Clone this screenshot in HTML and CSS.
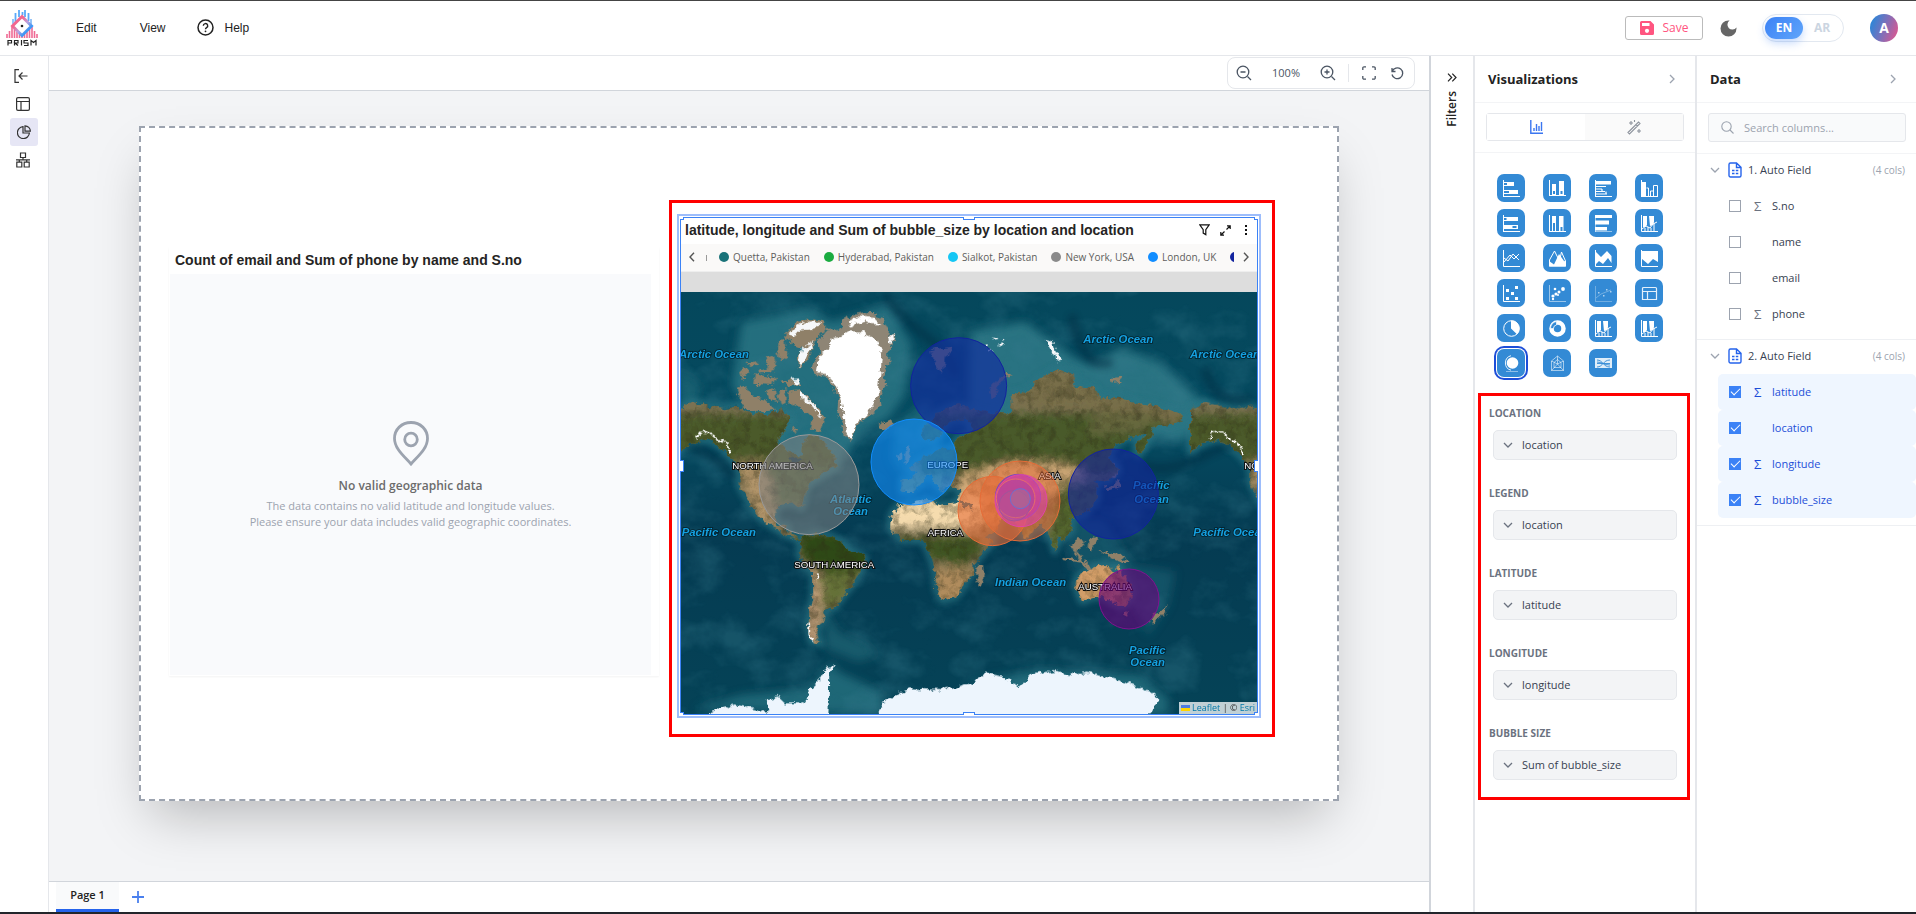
FILE: index.html
```html
<!DOCTYPE html>
<html lang="en">
<head>
<meta charset="utf-8">
<title>Prism</title>
<link rel="stylesheet" href="styles.css">
</head>
<body>
<svg class="sprite" width="0" height="0" aria-hidden="true">
  <symbol id="chev-down" viewBox="0 0 10 10"><path d="M1 3l4 4 4-4" fill="none" stroke="currentColor" stroke-width="1.3"/></symbol>
  <symbol id="chev-right" viewBox="0 0 10 10"><path d="M3 1l4 4-4 4" fill="none" stroke="currentColor" stroke-width="1.3"/></symbol>
  <symbol id="sheet" viewBox="0 0 14 16"><path d="M2.500 1h6L13 5.200V13.500a1.500 1.500 0 0 1-1.500 1.500h-9A1.500 1.500 0 0 1 1 13.500v-11A1.500 1.500 0 0 1 2.500 1zM8.500 1v4.500H13M4 8.500h2.500M7.800 8.500h2.500M4 11.500h2.500M7.800 11.500h2.500" fill="none" stroke="#2563eb" stroke-width="1.4"/></symbol>
  <symbol id="combo" viewBox="0 0 17 17"><path d="M2 1h4v9l-2 2H2zM8 1h5v6l-1 3-3 1z" fill="#fff"/><path d="M.5 0v16.500H17M1 14l4-3 4 2 3-4 4-2M4 16v-3M7 16v-4M10 16v-3M13 16V8" fill="none" stroke="#fff"/></symbol>
</svg>

<div class="app">
  <header class="topbar">
    <svg class="logo" viewBox="0 0 32 38">
      <defs><linearGradient id="lg" x1="0" y1="0" x2="1" y2="1"><stop offset=".3" stop-color="#f2668f"/><stop offset=".55" stop-color="#b9a3e0"/><stop offset=".75" stop-color="#3f97f5"/></linearGradient></defs>
      <path d="M9.500 14V4M13 8V1M16.500 6V3M19 8V1M22.500 12V4" stroke="#5aa9f8" stroke-width="1.800"/>
      <path d="M7 15v-5M25 15v-5" stroke="#7cb6f5" stroke-width="1.600"/>
      <path d="M1 29v-4M3.500 29v-7M6 29V18M8.500 29v-9M11 29v-6M13.500 29v-4M16 29v-2M18.500 29v-4M21 29v-6M23.500 29v-9M26 29V18M28.500 29v-7M31 29v-4" stroke="#ef6a94" stroke-width="1.600"/>
      <path d="M16 7.500L25.500 17 16 26.500 6.500 17z" fill="#fff" stroke="url(#lg)" stroke-width="3"/>
      <circle cx="16" cy="17" r="1.300" fill="#222"/>
      <path d="M2 36.500v-5h3.500v2.500H2M8.500 36.500v-5H12v2.500H9l3 2.500M15.500 31v5.500M22 31.500h-4V34h4v2.500h-4M25 36.500v-5l2.500 2 2.500-2v5" fill="none" stroke="#222" stroke-width="1.200"/>
    </svg>
    <nav class="menu">
      <button class="menu-item">Edit</button>
      <button class="menu-item">View</button>
      <button class="menu-item help">
        <svg width="17" height="17" viewBox="0 0 17 17"><circle cx="8.500" cy="8.500" r="7.500" fill="none" stroke="#222" stroke-width="1.500"/><path d="M6.300 6.800a2.200 2.200 0 1 1 3.300 1.900c-.8.500-1.100.8-1.100 1.600" fill="none" stroke="#222" stroke-width="1.400"/><circle cx="8.500" cy="12.300" r=".9" fill="#222"/></svg>
        Help</button>
    </nav>
    <div class="top-actions">
      <button class="save"><svg width="14" height="14" viewBox="0 0 14 14"><path d="M1.500 0h9L14 3.500v9a1.500 1.500 0 0 1-1.500 1.500h-11A1.500 1.500 0 0 1 0 12.500v-11A1.500 1.500 0 0 1 1.500 0z" fill="#ff5580"/><path d="M2 2h7.500v3H2z" fill="#fff"/><circle cx="7" cy="9.800" r="2.100" fill="#fff"/></svg>Save</button>
      <button class="moon" aria-label="Theme"><svg width="17" height="17" viewBox="0 0 17 17"><path d="M8.500.5a8 8 0 1 0 8 8c0-.4 0-.8-.1-1.100A4.900 4.900 0 1 1 9.600.6z" fill="#666"/></svg></button>
      <div class="lang"><button class="on">EN</button><button>AR</button></div>
      <button class="avatar">A</button>
    </div>
  </header>

  <div class="body">
    <aside class="rail">
      <button class="rail-btn" aria-label="Collapse"><svg width="14" height="14" viewBox="0 0 14 14"><path d="M5 .7H1v12.600h4M13.500 7H5M8.500 3.500L5 7l3.500 3.500" fill="none" stroke="#333" stroke-width="1.200"/></svg></button>
      <button class="rail-btn" aria-label="Table"><svg width="14" height="14" viewBox="0 0 14 14"><path d="M2 .6h10A1.400 1.400 0 0 1 13.400 2v10a1.400 1.400 0 0 1-1.400 1.400H2A1.400 1.400 0 0 1 .6 12V2A1.400 1.400 0 0 1 2 .6zM.6 4.500h12.800M5 4.500v9" fill="none" stroke="#333" stroke-width="1.200"/></svg></button>
      <button class="rail-btn active" aria-label="Report"><svg width="14" height="14" viewBox="0 0 14 14"><path d="M6 1.600A6 6 0 1 0 12.400 8H6zM8 .8v5.400h5.400A5.500 5.500 0 0 0 8 .8z" fill="none" stroke="#333" stroke-width="1.200"/></svg></button>
      <button class="rail-btn" aria-label="Model"><svg width="14" height="16" viewBox="0 0 14 16"><path d="M4.500 1h5v4.500h-5zM.8 10.200h5v4.800h-5zM8.200 10.200h5v4.800h-5zM7 5.500v2.300M0 7.800h14M3.300 8v2M10.700 8v2" fill="none" stroke="#333" stroke-width="1.200"/></svg></button>
    </aside>

    <main class="main">
      <div class="toolbar">
        <div class="zoom">
          <button aria-label="Zoom out"><svg width="16" height="16" viewBox="0 0 16 16"><path d="M11.500 11.500L15 15M4.500 7h5" /><circle cx="7" cy="7" r="5.800"/></svg></button>
          <span class="pct">100%</span>
          <button aria-label="Zoom in"><svg width="16" height="16" viewBox="0 0 16 16"><path d="M11.500 11.500L15 15M4.500 7h5M7 4.500v5"/><circle cx="7" cy="7" r="5.800"/></svg></button>
          <span class="sep"></span>
          <button aria-label="Fit"><svg width="14" height="14" viewBox="0 0 14 14"><path d="M.8 4V2A1.200 1.200 0 0 1 2 .8h2M10 .8h2A1.200 1.200 0 0 1 13.200 2v2M13.200 10v2a1.200 1.200 0 0 1-1.200 1.200h-2M4 13.200H2A1.200 1.200 0 0 1 .8 12v-2"/></svg></button>
          <button aria-label="Reset"><svg width="13" height="13" viewBox="0 0 13 13"><path d="M1 1v3.500h3.500M1.200 4.400A5.400 5.400 0 1 1 1 7.500"/></svg></button>
        </div>
      </div>

      <div class="stage">
        <div class="page">
          <section class="widget empty">
            <h2>Count of email and Sum of phone by name and S.no</h2>
            <div class="empty-body">
              <svg width="36" height="45" viewBox="0 0 36 45"><path d="M18 1.500C8.500 1.500 1.500 8.500 1.500 17.500 1.500 28 12 36 18 43c6-7 16.500-15 16.500-25.500C34.500 8.500 27.500 1.500 18 1.500z" fill="none" stroke="#9ca3af" stroke-width="2.800"/><circle cx="18" cy="18.500" r="6.300" fill="none" stroke="#9ca3af" stroke-width="2.800"/></svg>
              <strong>No valid geographic data</strong>
              <p>The data contains no valid latitude and longitude values.<br>Please ensure your data includes valid geographic coordinates.</p>
            </div>
          </section>

          <section class="widget map-widget">
            <div class="map-inner">
              <div class="map-head">
                <h2>latitude, longitude and Sum of bubble_size by location and location</h2>
                <button aria-label="Filter"><svg width="11" height="12" viewBox="0 0 11 12"><path d="M.8.800h9.400L6.800 5.600v5l-2.600-1.500V5.600z" fill="none" stroke="#111" stroke-width="1.200"/></svg></button>
                <button aria-label="Expand"><svg width="11" height="11" viewBox="0 0 11 11"><path d="M6.500 4.500L10 1M7 .8h3.200V4M4.500 6.500L1 10M.8 7v3.200H4" fill="none" stroke="#111" stroke-width="1.200"/></svg></button>
                <button aria-label="More"><svg width="4" height="10" viewBox="0 0 4 10"><path d="M1 0h2v2H1zM1 4h2v2H1zM1 8h2v2H1z" fill="#111"/></svg></button>
              </div>
              <div class="legend">
                <button aria-label="Previous"><svg width="6" height="10" viewBox="0 0 6 10"><path d="M5 .8L1 5l4 4.200" fill="none" stroke="#555" stroke-width="1.400"/></svg></button>
                <div class="legend-items">
                  <span class="cut"></span>
                  <span class="item"><i class="dot teal"></i>Quetta, Pakistan</span>
                  <span class="item"><i class="dot green"></i>Hyderabad, Pakistan</span>
                  <span class="item"><i class="dot cyan"></i>Sialkot, Pakistan</span>
                  <span class="item"><i class="dot gray"></i>New York, USA</span>
                  <span class="item"><i class="dot blue"></i>London, UK</span>
                  <span class="item"><i class="dot navy"></i></span>
                </div>
                <button aria-label="Next"><svg width="6" height="10" viewBox="0 0 6 10"><path d="M1 .8L5 5 1 9.200" fill="none" stroke="#555" stroke-width="1.400"/></svg></button>
              </div>
              <div class="map">
                <svg class="world" viewBox="18 21 1728 1266" preserveAspectRatio="xMidYMax slice">
                  <defs>
                    <filter id="rough" x="-5%" y="-5%" width="110%" height="110%">
                      <feTurbulence type="fractalNoise" baseFrequency=".05" numOctaves="4" seed="4" result="n"/>
                      <feDisplacementMap in="SourceGraphic" in2="n" scale="24" xChannelSelector="R" yChannelSelector="G"/>
                    </filter>
                    <filter id="terrain" x="0" y="0" width="100%" height="100%">
                      <feTurbulence type="fractalNoise" baseFrequency=".035" numOctaves="5" seed="9" result="n"/>
                      <feColorMatrix in="n" type="matrix" values="0 0 0 0 .03  0 0 0 0 .03  0 0 0 0 .01  2.200 0 0 0 -.9"/>
                    </filter>
                    <filter id="sea" x="0" y="0" width="100%" height="100%">
                      <feTurbulence type="fractalNoise" baseFrequency=".007 .01" numOctaves="5" seed="21"/>
                      <feColorMatrix type="matrix" values="0 0 0 0 .04  0 0 0 0 .2  0 0 0 0 .27  0 2.800 0 0 -1.250"/>
                    </filter>
                    <filter id="b10" x="-30%" y="-30%" width="160%" height="160%"><feGaussianBlur stdDeviation="9"/></filter>
                    <filter id="b16" x="-30%" y="-30%" width="160%" height="160%"><feGaussianBlur stdDeviation="15"/></filter>
                    <linearGradient id="ocean" x1="0" y1="0" x2="0" y2="1"><stop offset="0" stop-color="#05475b"/><stop offset=".35" stop-color="#054a60"/><stop offset=".6" stop-color="#053b52"/><stop offset="1" stop-color="#054357"/></linearGradient>
                    <path id="na" d="M10 375L50 350 100 363 150 370 190 362 230 385 280 388 320 372 350 402 322 440 310 470 345 505 378 510 384 470 405 450 440 465 475 505 485 545 450 560 425 580 400 600 388 640 382 668 350 655 312 660 298 690 308 722 338 722 335 740 365 752 380 768 330 750 285 720 250 690 215 640 192 600 190 550 165 515 130 482 95 463 40 480 10 505 10 440z"/>
                    <path id="sa" d="M378 760L420 745 460 750 500 770 520 795 570 815 565 838 540 890 510 925 480 965 452 975 440 1015 425 1025 430 1065 438 1076 410 1070 400 1035 405 975 415 925 415 865 385 835 372 805z"/>
                    <path id="africa" d="M648 690L670 662 720 650 765 645 790 660 850 655 885 665 905 710 935 760 955 765 925 800 895 840 897 860 870 895 842 935 802 947 785 915 780 865 770 825 755 785 740 765 680 765 645 730z"/>
                    <path id="eurasia" d="M680 622L680 585 708 586 722 560 702 548 742 520 772 508 790 492 835 492 845 460 880 450 892 425 868 400 820 410 795 450 770 470 745 460 742 435 790 380 850 357 905 375 955 385 1008 385 1005 330 1060 318 1085 288 1145 252 1200 272 1195 305 1260 312 1275 342 1330 335 1360 350 1430 360 1470 372 1510 385 1527 405 1480 420 1440 425 1425 455 1400 500 1388 510 1385 480 1412 448 1360 458 1320 480 1300 520 1330 552 1302 590 1260 585 1268 640 1228 690 1185 700 1190 735 1160 765 1150 745 1140 800 1125 750 1100 715 1078 725 1052 765 1030 720 1010 695 985 690 960 740 925 755 895 690 895 655 850 645 860 620 830 600 800 620 780 590 765 570 740 590 715 620z"/>
                    <path id="aus" d="M1205 875L1235 860 1260 845 1285 840 1315 845 1310 860 1325 865 1330 840 1340 865 1365 905 1370 930 1350 965 1330 965 1305 950 1280 933 1250 937 1220 950 1210 925 1203 900z"/>
                    <g id="isles">
                      <path d="M330 150L365 110 410 102 450 110 455 130 430 160 410 192 395 232 372 250 370 220 385 190 350 178zM310 175l20-18 8 60-15 10-15-20zM340 320L372 315 402 340 430 370 450 405 437 442 405 430 415 402 385 375 345 352zM185 312l30-8 15 30 40 10 30 30-50 8-45-15zM270 315l30-5 4 35-20-5zM310 312l22-2 0 50-20-10zM315 290l55-8 6 18-40 4zM240 268l60 12-5 20-60-3zM195 255l28-6-2 20-22 10zM215 235l20-12 12 12-20 8zM270 215l25-5 10 30-10 20-15-10zM250 250l30-4 10 14-38 6zM350 425l20 5-10 18z"/>
                      <path d="M615 412l15 2 20-9 6 14-20 16-20-5zM905 842l22-2 2 20-10 42-12-4-4-30zM1190 785l45 50 25 25-12 2-38-38zM1185 780L1215 760 1228 780 1210 802 1192 796zM1240 765l20-12 4 14-14 28-12-8zM1270 798L1325 805 1360 830 1345 832 1310 820zM1165 815l70 14-2 6-66-10zM1435 985l22-8 20-20-4 22-38 40-12-8zM1345 975l16 3-8 16-8-6zM1305 555l10-28 12 30-10 25zM1290 605l24-5 18-16 4 18-40 14zM1305 280l30-5 8 16-30 2zM950 340l-8-22 25-36 30-18 12 4-38 28-8 36zM765 195l60-10 8 14-20 14-5 40-10 10-20-30zM690 500l14-20 8 40-22 14zM670 510l12-5 0 18-12 2z"/>
                    </g>
                    <clipPath id="landclip"><use href="#na"/><use href="#na" x="1536"/><use href="#sa"/><use href="#africa"/><use href="#eurasia"/><use href="#aus"/></clipPath>
                  </defs>
                  <rect x="18" y="-40" width="1728" height="1330" fill="url(#ocean)"/>
                  <g filter="url(#b16)" fill="#2a7684">
                    <path opacity=".85" d="M200 110L400 70 470 110 640 60 710 180 690 330 640 400 560 440 480 560 400 600 220 390 170 300z"/>
                    <path opacity=".95" d="M885 140L1050 110 1200 220 1250 240 1340 190 1450 230 1560 330 1640 400 1560 440 1510 470 1400 440 1100 480 880 420z"/>
                    <path opacity=".5" d="M10 250L80 300 60 380 10 380z"/>
                    <path opacity=".6" d="M660 420L760 340 800 500 700 600 650 520z"/>
                    <path opacity=".4" d="M1160 700L1290 700 1380 840 1500 860 1480 960 1420 1050 1300 860 1190 860z"/>
                    <path opacity=".7" d="M60 1270L200 1230 400 1210 470 1130 490 1160 620 1220 620 1290zM900 1190L1100 1150 1400 1170 1480 1240 1480 1290 890 1290z"/>
                    <path opacity=".5" d="M450 960l40 80 80 30 40 40-60 20-100-40z"/>
                  </g>
                  <rect x="18" y="-40" width="1728" height="1330" filter="url(#sea)" opacity=".35"/>
                  <g fill="none" stroke="#2a7684" stroke-width="20" stroke-linejoin="round" opacity=".8" filter="url(#b10)">
                    <use href="#na"/><use href="#na" x="1536"/><use href="#sa"/><use href="#africa"/><use href="#eurasia"/><use href="#aus"/>
                  </g>
                  <g fill="none" stroke="#022c40" stroke-width="26" filter="url(#b10)" opacity=".45"><path d="M630 30q60 80 130 130t80 110M30 480q90 20 150 100M1410 540q60 30 180-30t120-10M1190 90q40 180 120 140M1590 250q30 120 140 90"/></g>
                  <g filter="url(#rough)">
                    <g fill="#7d7353"><use href="#na"/><use href="#na" x="1536"/><use href="#sa"/><use href="#africa"/><use href="#eurasia"/><use href="#aus"/></g><use href="#isles" fill="#8f8068"/>
                    <g clip-path="url(#landclip)">
                      <g filter="url(#b16)">
                        <g id="nacol"><rect x="-20" y="388" width="520" height="192" fill="#4b5a2c"/><path d="M180 530l90 0 40 200-60-20z" fill="#b3956b"/><path d="M300 540h180v120H300z" fill="#55653a"/></g>
                        <use href="#nacol" x="1536"/>
                        <rect x="730" y="385" width="820" height="185" fill="#485a2a"/>
                        <path d="M1000 340L1100 240 1240 300 1540 380 1500 420 1400 400 1240 370 1100 370z" fill="#786e49"/>
                        <path d="M1260 380l200 10-60 50-160 10z" fill="#66683c"/>
                        <path d="M860 570L1000 530 1160 535 1230 560 1190 610 1050 640 1000 720 880 720 840 620z" fill="#cfa877"/>
                        <path d="M1160 590h140v220h-190z" fill="#52652f"/><path d="M1020 660h60v120h-60z" fill="#8a7b48"/>
                        <path d="M680 570h120v60H680z" fill="#7a7f4a"/>
                        <path d="M630 640h290v90H630z" fill="#f6dcae"/><path d="M640 755h270l10 50-60 40-110-30z" fill="#3f5420"/><path d="M765 850h130v120H765z" fill="#b08c5d"/>
                        <path d="M360 740h230v120H400z" fill="#2d4a14"/><path d="M430 860h130l-60 90-60 30z" fill="#657138"/><path d="M395 850h35l10 90-10 150-40-10z" fill="#bd9b78"/>
                        <path d="M1195 830h190v140h-190z" fill="#d49f69"/><path d="M1330 850l50 60-20 60-30-20z" fill="#86814a"/>
                      </g>
                      <rect x="18" y="230" width="1728" height="860" filter="url(#terrain)" opacity=".5"/>
                    </g>
                    <path d="M338 522l24-8 24 12-30 12zM360 545l12-14 8 22z" fill="#173949"/>
                    <path d="M412 240L435 205 430 170 455 135 495 130 505 105 545 85 590 82 625 100 642 135 640 150 665 150 655 175 640 200 640 240 625 270 635 300 615 330 620 365 590 385 560 405 540 440 525 465 505 445 500 410 487 380 490 340 470 295 450 270 425 275 410 255z" fill="#8e8574"/>
                    <path d="M430 235L440 205 465 182 470 160 500 155 520 138 560 140 600 165 622 200 617 260 612 310 600 350 575 385 545 415 528 460 512 440 505 390 495 340 475 290 450 265 425 262zM515 110l35-16 50 5 20 20-30-2-20-10-40 15z" fill="#fff"/>
                    <path d="M340 148l35-32 40-8 25 8-30 15-30 2-25 22zM380 190l40-20-20 30-15 35-12 8zM350 282l22-2 2 16-20 2zM375 320l50 45 15 35-25-30-40-35zM640 155l22-4-10 20-10 8zM1115 165l18 5 12 40-12-5zM1140 200l22 25-18 6zM925 180l8-4 3 6-8 4zM940 192l10-3 3 6-10 4zM955 160l10-4 2 8-9 3zM970 178l14-5 3 7-14 5zM985 160l6-2 1 5-6 2z" fill="#f6f8fa"/>
                    <g id="peaks" fill="none" stroke="#fff" stroke-width="6"><path d="M66 460l8-20 30 2 20 18 30 15 14 30" stroke-dasharray="12 3"/></g><use href="#peaks" x="1536"/>
                    <path d="M403 1010v40l14 22M425 865l4 20" stroke="#fff" stroke-width="5" fill="none"/>
                    <g fill="#edf5fd"><path d="M95 1300L110 1278 180 1258 250 1275 280 1280 275 1245 310 1236 330 1255 375 1255 395 1245 400 1220 430 1190 455 1148 480 1138 463 1165 460 1300zM605 1300L625 1250 700 1210 800 1215 885 1195 935 1163 985 1175 1035 1205 1070 1168 1135 1158 1185 1170 1235 1160 1305 1175 1365 1195 1425 1220 1447 1240 1440 1265 1412 1300z"/></g>
                  </g>
                  <g class="sea-name">
                    <text x="12" y="219">Arctic Ocean</text><text x="1225" y="173">Arctic Ocean</text><text x="1545" y="219">Arctic Ocean</text>
                    <text x="20" y="752">Pacific Ocean</text><text x="1555" y="752">Pacific Ocean</text><text x="960" y="902">Indian Ocean</text>
                    <text x="465" y="653">Atlantic</text><text x="475" y="690">Ocean</text>
                    <text x="1374" y="613">Pacific</text><text x="1378" y="653">Ocean</text>
                    <text x="1362" y="1106">Pacific</text><text x="1366" y="1142">Ocean</text>
                  </g>
                  <g class="land-name">
                    <text x="172" y="553">NORTH AMERICA</text><text x="358" y="848">SOUTH AMERICA</text><text x="757" y="548">EUROPE</text><text x="758" y="752">AFRICA</text><text x="1091" y="583">ASIA</text><text x="1210" y="914">AUSTRALIA</text><text x="1708" y="553">NORTH AMERICA</text>
                  </g>
                  <g fill-opacity=".6" stroke-width="3">
                    <circle cx="402" cy="599" r="150" fill="#828282" stroke="#999" fill-opacity=".55"/>
                    <circle cx="851" cy="302" r="144" fill="#12309e" stroke="#12239e" fill-opacity=".7"/>
                    <circle cx="717" cy="531" r="129" fill="#118dff" stroke="#118dff"/>
                    <circle cx="1315" cy="627" r="135" fill="#12239e" stroke="#12239e"/>
                    <circle cx="1362" cy="942" r="90" fill="#6b007b" stroke="#81128f"/>
                    <circle cx="953" cy="678" r="104" fill="#e66c37" stroke="#e66c37"/>
                    <circle cx="1035" cy="648" r="120" fill="#e66c37" stroke="#e66c37" fill-opacity=".5"/>
                    <circle cx="1029" cy="636" r="68" fill="#a0309a" stroke="#744ec2"/>
                    <circle cx="1038" cy="647" r="78" fill="#e044a7" stroke="#e044a7"/>
                    <circle cx="1022" cy="640" r="58" fill="#b0469a" stroke="#e66c6c"/>
                    <circle cx="1018" cy="662" r="46" fill="#b55a8c" stroke="#a0549a" fill-opacity=".4"/>
                    <circle cx="1036" cy="641" r="30" fill="#a86a94" stroke="#6b6fd0"/>
                  </g>
                </svg>
                <div class="credit"><svg width="9" height="6" viewBox="0 0 9 6"><path d="M0 0h9v3H0z" fill="#4c7be1"/><path d="M0 3h9v3H0z" fill="#ffd500"/></svg> <a href="#">Leaflet</a> | © <a href="#">Esri</a></div>
              </div>
            </div>
            <div class="handles"><i class="h tl"></i><i class="h t"></i><i class="h tr"></i><i class="h l"></i><i class="h r"></i><i class="h bl"></i><i class="h b"></i><i class="h br"></i></div>
          </section>
          <div class="mark"></div>
        </div>
      </div>

      <footer class="pages"><button class="page-tab">Page 1</button><button class="add" aria-label="Add page"><svg width="12" height="12" viewBox="0 0 12 12"><path d="M6 0v12M0 6h12" stroke="#4a80ee" stroke-width="1.800"/></svg></button></footer>
    </main>

    <aside class="filters">
      <button aria-label="Expand filters"><svg width="10" height="9" viewBox="0 0 10 9"><path d="M1 .7l3.700 3.800L1 8.300M5.300.7L9 4.500 5.300 8.300" fill="none" stroke="#222" stroke-width="1.200"/></svg></button>
      <span>Filters</span>
    </aside>

    <aside class="panel viz">
      <div class="panel-head"><h3>Visualizations</h3><button aria-label="Collapse visualizations"><svg width="10" height="10"><use href="#chev-right"/></svg></button></div>
      <div class="tabs-wrap"><div class="tabs">
        <button class="on" aria-label="Charts"><svg width="13" height="14" viewBox="0 0 13 14"><path d="M.8 0v13.200H13M4 11V8M6.500 11V4M9 11V6M11.500 11V2" fill="none" stroke="#3b76f0" stroke-width="1.400"/></svg></button>
        <button aria-label="Format"><svg width="15" height="15" viewBox="0 0 15 15"><path d="M1 12.500L11.500 2l1.500 1.500L2.500 14zM9 4.500L10.500 6M4 1v4M2 3h4M12 9v4M10 11h4M7.500 0v2" fill="none" stroke="#8c929c" stroke-width="1.100"/></svg></button>
      </div></div>
      <div class="tiles">
        <button class="tile" aria-label="Stacked bar"><svg viewBox="0 0 17 17"><path d="M.5 0v17M0 16.500h17" stroke="#fff"/><path d="M1 2h10v4H1zM1 10h14v4H1z" fill="#fff"/><path d="M1 3h3v2H1zM1 11h5v2H1z" fill="#338ad5"/></svg></button>
        <button class="tile" aria-label="Stacked column"><svg viewBox="0 0 17 17"><path d="M.5 0v16M0 15.500h17" stroke="#fff"/><path d="M3 4h4v11H3zM10 1h5v14h-5z" fill="#fff"/><path d="M4 11h2v3H4zM11.500 11h2v3h-2z" fill="#338ad5"/></svg></button>
        <button class="tile" aria-label="Clustered bar"><svg viewBox="0 0 17 17"><path d="M.5 0v17M0 16.500h17" stroke="#fff"/><path d="M1 1h15v3.500H1z" fill="#fff"/><path d="M1 6.500h10M1 9h6M1 11.500h9M1 14h11M7 9v2.500M11 11.500V14" fill="none" stroke="#fff" stroke-width="1.200"/></svg></button>
        <button class="tile" aria-label="Clustered column"><svg viewBox="0 0 17 17"><path d="M.5 0v17M0 16.500h17" stroke="#fff"/><path d="M1 2h4v14H1z" fill="#fff"/><path d="M5.500 8h2v8M9.500 16v-5h3v5M12.500 16V5.500h4V16" fill="none" stroke="#fff"/></svg></button>
        <button class="tile" aria-label="Full stacked bar"><svg viewBox="0 0 17 17"><path d="M.5 0v17M0 16.500h17" stroke="#fff"/><path d="M1 2h14v4H1zM1 10h14v4H1z" fill="#fff"/><path d="M1 3h2.500v2H1zM9.500 11h4v2h-4z" fill="#338ad5"/></svg></button>
        <button class="tile" aria-label="Full stacked column"><svg viewBox="0 0 17 17"><path d="M.5 0v17M0 16.500h17" stroke="#fff"/><path d="M3 1h4v15H3zM10 1h4.500v15H10z" fill="#fff"/><path d="M4 8h2v8H4zM11.500 12h2v4h-2z" fill="#338ad5"/></svg></button>
        <button class="tile" aria-label="Bars"><svg viewBox="0 0 17 17"><path d="M0 0h17v3H0zM0 5.500h14v4H0zM0 12h12v3.500H0z" fill="#fff"/><path d="M.5 0v17M0 16.500h17" stroke="#fff" opacity=".5"/></svg></button>
        <button class="tile" aria-label="Combo"><svg><use href="#combo"/></svg></button>
        <button class="tile" aria-label="Line"><svg viewBox="0 0 17 17"><path d="M.5 0v16.500H17M1 12l6-7 4 4 5-5M1 8l4 3 5-7 6 6" fill="none" stroke="#fff"/></svg></button>
        <button class="tile" aria-label="Area"><svg viewBox="0 0 17 17"><path d="M.5 16V10L5.500 1l5 10 2-9 4 9v5z" fill="none" stroke="#fff"/><path d="M0 11l5 3.500L10 4l5 7 2 .5v5H0z" fill="#fff"/></svg></button>
        <button class="tile" aria-label="Stacked area"><svg viewBox="0 0 17 17"><path d="M.5 0v16.500H17" fill="none" stroke="#fff"/><path d="M1 2l5 5 6-6 4.500 5v7L13 8l-5 6-4-3-3 3z" fill="#fff"/></svg></button>
        <button class="tile" aria-label="Full area"><svg viewBox="0 0 17 17"><path d="M.5 0v16.500H17" fill="none" stroke="#fff"/><path d="M1 1h16v11l-5-3-5 5-6-5z" fill="#fff"/></svg></button>
        <button class="tile" aria-label="Scatter"><svg viewBox="0 0 17 17"><path d="M.5 0v16.500H17" fill="none" stroke="#fff"/><path d="M3 4h3v3H3zM12 1h3v3h-3zM8 7h3v3H8zM3 12h3v3H3zM12 12h3v3h-3z" fill="#fff"/></svg></button>
        <button class="tile" aria-label="Dots"><svg viewBox="0 0 17 17"><path d="M.5 0v16.500H17" fill="none" stroke="#fff" opacity=".5"/><g fill="#fff"><circle cx="6" cy="4" r="1.300"/><circle cx="14" cy="4" r="1.900"/><circle cx="10" cy="7" r="1.500"/><circle cx="7" cy="9" r="1.600"/><circle cx="4" cy="11" r="1.600"/><circle cx="4" cy="14" r="1.200"/><circle cx="9" cy="10" r="1"/></g></svg></button>
        <button class="tile" aria-label="Trend"><svg viewBox="0 0 17 17"><path d="M.5 1v15.500H17M1 13l5-4 5-2 5-2" fill="none" stroke="#fff" opacity=".3"/><path d="M3 7h1.500v1.500H3zM8 10h1.500v1.500H8zM11 4h1.500v1.500H11zM15 6h1.500v1.500H15z" fill="#fff" opacity=".6"/></svg></button>
        <button class="tile" aria-label="Table"><svg viewBox="0 0 17 17"><path d="M2.500 2.500h12a1 1 0 0 1 1 1v11h-14v-11a1 1 0 0 1 1-1zM1.500 6.500h14M6.500 6.500v8" fill="none" stroke="#e4f0fb" stroke-width="1.200"/></svg></button>
        <button class="tile" aria-label="Pie"><svg viewBox="0 0 17 17"><circle cx="8.500" cy="8.500" r="7.800" fill="none" stroke="#fff"/><path d="M8 .5a8 8 0 0 1 6 13.700L8 8.500z" fill="#fff"/></svg></button>
        <button class="tile" aria-label="Donut"><svg viewBox="0 0 17 17"><circle cx="8.500" cy="8.500" r="6" fill="none" stroke="#fff" stroke-width="4.500"/><path d="M1.500 8.500a7 7 0 0 1 6-7v3.500a3.500 3.500 0 0 0-3 3.500z" fill="#338ad5" stroke="#fff" stroke-width=".7"/></svg></button>
        <button class="tile" aria-label="Combo line"><svg><use href="#combo"/></svg></button>
        <button class="tile" aria-label="Combo stacked"><svg><use href="#combo"/></svg></button>
        <button class="tile selected" aria-label="Map"><svg viewBox="0 0 17 17"><circle cx="9.500" cy="8" r="5.800" fill="#fff"/><path d="M8 .7a7.500 7.500 0 0 0 0 14.500M3 17h12" fill="none" stroke="#fff" stroke-width=".9"/></svg></button>
        <button class="tile" aria-label="Radar"><svg viewBox="0 0 17 17"><path d="M8.500 1l6 5v9.500h-12V6zM8.500 4.500l3.500 3v5H5v-5zM8.500 1v8l6 6.500M8.500 9l-6 6.500M2.500 6l6 3 6-3" fill="none" stroke="#fff" stroke-width=".8" opacity=".7"/></svg></button>
        <button class="tile" aria-label="Sankey"><svg viewBox="0 0 17 17"><path d="M0 3h17v10H0z" fill="#fff" opacity=".85"/><path d="M2 5c6 0 6 7 13 7M2 12c6 0 6-7 13-7M2 8.500h13M2 7c5 0 7 3 13 3" fill="none" stroke="#338ad5" stroke-width=".9"/></svg></button>
      </div>
      <div class="fields">
        <div class="field"><h4>LOCATION</h4><button><svg width="10" height="10"><use href="#chev-down"/></svg>location</button></div>
        <div class="field"><h4>LEGEND</h4><button><svg width="10" height="10"><use href="#chev-down"/></svg>location</button></div>
        <div class="field"><h4>LATITUDE</h4><button><svg width="10" height="10"><use href="#chev-down"/></svg>latitude</button></div>
        <div class="field"><h4>LONGITUDE</h4><button><svg width="10" height="10"><use href="#chev-down"/></svg>longitude</button></div>
        <div class="field"><h4>BUBBLE SIZE</h4><button><svg width="10" height="10"><use href="#chev-down"/></svg>Sum of bubble_size</button></div>
      </div>
    </aside>

    <aside class="panel data">
      <div class="panel-head"><h3>Data</h3><button aria-label="Collapse data"><svg width="10" height="10"><use href="#chev-right"/></svg></button></div>
      <div class="search-wrap"><label class="search"><svg width="13" height="13" viewBox="0 0 13 13"><circle cx="5.500" cy="5.500" r="4.700" fill="none" stroke="#9ca3af" stroke-width="1.100"/><path d="M9 9l3.500 3.500" stroke="#9ca3af" stroke-width="1.100"/></svg><input type="text" placeholder="Search columns..." aria-label="Search columns"></label></div>
      <div class="source">
        <div class="source-head"><svg class="c" width="10" height="10"><use href="#chev-down"/></svg><svg width="14" height="16"><use href="#sheet"/></svg><span>1. Auto Field</span><small>(4 cols)</small></div>
        <label class="col"><input type="checkbox"><b>Σ</b>S.no</label>
        <label class="col"><input type="checkbox"><b></b>name</label>
        <label class="col"><input type="checkbox"><b></b>email</label>
        <label class="col"><input type="checkbox"><b>Σ</b>phone</label>
      </div>
      <div class="source">
        <div class="source-head"><svg class="c" width="10" height="10"><use href="#chev-down"/></svg><svg width="14" height="16"><use href="#sheet"/></svg><span>2. Auto Field</span><small>(4 cols)</small></div>
        <label class="col picked"><input type="checkbox" checked><b>Σ</b>latitude</label>
        <label class="col picked"><input type="checkbox" checked><b></b>location</label>
        <label class="col picked"><input type="checkbox" checked><b>Σ</b>longitude</label>
        <label class="col picked"><input type="checkbox" checked><b>Σ</b>bubble_size</label>
      </div>
    </aside>
  </div>
</div>
</body>
</html>
```
FILE: styles.css
```css
* { box-sizing: border-box; }
body { margin: 0; font-family: "Open Sans", "Noto Sans", sans-serif; font-size: 11px; line-height: 16px; color: #374151; background: #fff; }
button { font: inherit; color: inherit; background: none; border: 0; padding: 0; margin: 0; display: flex; align-items: center; justify-content: center; }
h2, h3, h4, p { margin: 0; }
.sprite { position: absolute; }
.app { height: 100vh; display: flex; flex-direction: column; border-top: 1px solid #444; border-bottom: 2px solid #22252b; overflow: hidden; }

.topbar { height: 55px; flex: none; display: flex; align-items: center; border-bottom: 1px solid #e5e7eb; padding: 0 18px 0 6px; }
.logo { width: 32px; height: 38px; }
.menu { display: flex; align-items: center; gap: 43px; margin-left: 38px; padding-bottom: 1px; font: 12px/16px "Liberation Sans", Arial, sans-serif; color: #222; }
.menu-item { gap: 10px; }
.help { margin-left: -11px; }
.top-actions { margin-left: auto; display: flex; align-items: center; font-size: 12px; }
.save { width: 78px; height: 24px; gap: 9px; border: 1px solid #bbb; border-radius: 3px; color: #ff5580; }
.moon { margin: 0 25px 0 17px; }
.lang { display: flex; width: 82px; height: 28px; padding: 2px; border: 1px solid #e2e8f0; border-radius: 14px; font-weight: 700; }
.lang button { flex: 1; color: #cbd5e1; border-radius: 11px; }
.lang .on { color: #fff; background: linear-gradient(135deg, #3b82f6, #60a5fa); box-shadow: 0 4px 8px rgba(59, 130, 246, .3); }
.avatar { width: 28px; height: 28px; margin-left: 26px; border-radius: 50%; color: #fff; font-weight: 700; font-size: 14px; background: linear-gradient(110deg, #2c86d8 10%, #7c70ba 50%, #e0568e 95%); }

.body { flex: 1; min-height: 0; display: grid; grid-template-columns: 49px minmax(0, 1fr) 44px 222px 219px; }
.rail { border-right: 1px solid #e5e7eb; padding: 6px 0 0 10px; }
.rail-btn { width: 28px; height: 28px; border-radius: 3px; }
.rail-btn:first-child { width: 22px; }
.rail-btn:nth-child(2), .rail-btn:nth-child(4) { width: 25px; }
.rail-btn.active { background: #e6e6f5; }

.main { display: flex; flex-direction: column; border-right: 2px solid #d1d5db; min-height: 0; }
.toolbar { height: 35px; flex: none; display: flex; justify-content: flex-end; align-items: center; padding-right: 14px; border-bottom: 1px solid #d1d5db; }
.zoom { display: flex; align-items: center; height: 32px; width: 188px; padding: 0 10px 0 8px; border: 1px solid #e5e7eb; border-radius: 8px; color: #4b5563; }
.zoom svg { fill: none; stroke: #4b5563; stroke-width: 1.3; }
.pct { flex: 1; text-align: center; }
.sep { width: 1px; height: 18px; background: #e5e7eb; margin: 0 13px 0 12px; }
.zoom .sep + button { margin-right: 15px; }
.stage { flex: 1; min-height: 0; overflow: hidden; padding: 35px 90px 0; background: #f3f4f6; }
.page { position: relative; aspect-ratio: 16 / 9; background: #fff; border: 2px dashed #9ca3af; box-shadow: 0 25px 50px -12px rgba(0, 0, 0, .25); }
.pages { height: 31px; flex: none; display: flex; border-top: 1px solid #d1d5db; padding-left: 7px; }
.page-tab { width: 63px; background: #f9fafb; border-bottom: 3px solid #2563eb; font-weight: 600; color: #222; padding-bottom: 1px; }
.add { margin-left: 13px; }

h2 { font: bold 14px/20px "Liberation Sans", Arial, sans-serif; color: #252423; white-space: nowrap; }
.widget { position: absolute; display: flex; flex-direction: column; }
.empty { left: 28px; top: 119px; width: 490px; height: 429px; padding: 3px 8px 1px 1px; box-shadow: 0 1px 2px rgba(0, 0, 0, .05); }
.empty h2 { padding: 0 5px 4px; }
.empty-body { flex: 1; display: flex; flex-direction: column; align-items: center; justify-content: center; background: #f9fafc; text-align: center; color: #9ca3af; padding-top: 2px; }
.empty-body strong { margin-top: 12px; font-size: 12px; font-weight: 600; color: #6b6b6b; }
.empty-body p { margin-top: 4px; }

.map-widget { left: 536px; top: 86px; width: 584px; height: 504px; border: 2px solid #9dbdfb; padding: 1px; }
.map-inner { flex: 1; display: flex; flex-direction: column; border: 1px solid #3b82f6; min-height: 0; }
.map-head { height: 26px; flex: none; display: flex; align-items: center; padding: 0 9px 2px 4px; gap: 10px; }
.map-head h2 { flex: 1; }
.map-head button:last-child { margin-left: 3px; }
.legend { height: 28px; flex: none; display: flex; align-items: center; gap: 9px; padding: 0 8px 2px; background: #faf9f8; border-bottom: 1px solid #eee; color: #605e5c; font-size: 10px; }
.legend-items { flex: 1; display: flex; gap: 14px; overflow: hidden; }
.cut { flex: none; width: 3px; height: 6px; margin: 6px -2px 0 0; border-right: 1px solid #999; }
.item { display: flex; align-items: center; gap: 4px; white-space: nowrap; flex: none; }
.dot { width: 10px; height: 10px; border-radius: 50%; }
.teal { background: #197278; } .green { background: #1aab40; } .cyan { background: #15c6f4; } .gray { background: #8a8a8a; } .blue { background: #118dff; } .navy { background: #12239e; }
.map { flex: 1; min-height: 0; position: relative; border-top: 20px solid #ddd; }
.world { display: block; width: 100%; height: 100%; }
.sea-name { font: italic bold 34px "Liberation Sans", Arial, sans-serif; fill: #14a0e0; stroke: #04202b; stroke-width: 5px; paint-order: stroke; }
.land-name { font: 29px "Liberation Sans", Arial, sans-serif; fill: #fff; stroke: #111; stroke-width: 6px; paint-order: stroke; }
.credit { position: absolute; right: 0; bottom: 0; height: 12px; padding: 0 2px; background: rgba(255, 255, 255, .75); font-size: 9px; line-height: 12px; color: #333; }
.credit a { color: #0078a8; text-decoration: none; }
.handles { position: absolute; inset: 1px; overflow: hidden; }
.h { position: absolute; width: 12px; height: 12px; background: #fff; border: 1px solid #3b82f6; }
.tl, .t, .tr { top: -9px; } .bl, .b, .br { bottom: -9px; }
.tl, .l, .bl { left: -8px; } .tr, .r, .br { right: -8px; }
.t, .b { left: calc(50% - 6px); } .l, .r { top: calc(50% - 6px); }
.mark { position: absolute; left: 528px; top: 72px; width: 606px; height: 537px; border: 3px solid #f00; pointer-events: none; }

.filters { display: flex; flex-direction: column; align-items: center; gap: 9px; padding-top: 17px; border-right: 2px solid #e5e7eb; }
.filters span { writing-mode: vertical-rl; transform: rotate(180deg); font-size: 12px; font-weight: 600; color: #222; }

.panel { background: #fff; }
.viz { border-right: 2px solid #e5e7eb; }
.panel-head { height: 47px; display: flex; align-items: center; justify-content: space-between; padding: 0 18px 0 13px; border-bottom: 1px solid #f3f4f6; color: #9ca3af; }
h3 { font-size: 13px; line-height: 18px; font-weight: 700; color: #222; }
.tabs-wrap { padding: 10px 11px 11px; border-bottom: 1px solid #f3f4f6; }
.tabs { display: flex; height: 28px; border: 1px solid #e5e7eb; border-radius: 3px; }
.tabs button { flex: 1; background: #fafafa; }
.tabs .on { background: #fff; }
.tiles { display: grid; grid-template-columns: repeat(4, 28px); gap: 7px 18px; padding: 21px 0 16px 22px; }
.tile { width: 28px; height: 28px; border-radius: 7px; background: #338ad5; }
.tile svg { width: 17px; height: 17px; fill: none; }
.selected { box-shadow: 0 0 0 1px #fff, 0 0 0 3px #1d4ed8; }
.fields { margin: 0 5px 0 3px; border: 3px solid #f00; padding: 9px 9px 17px 8px; display: grid; gap: 25px; }
.field { display: grid; gap: 9px; }
h4 { font-size: 10px; line-height: 16px; font-weight: 700; color: #6b7280; }
.field button { height: 30px; margin: 0 1px 0 4px; padding-left: 9px; justify-content: flex-start; gap: 9px; background: #f3f4f6; border: 1px solid #e5e7eb; border-radius: 5px; }
.field svg { color: #6b7280; }

.search-wrap { padding: 10px 10px 11px 11px; border-bottom: 1px solid #f3f4f6; }
.search { display: flex; align-items: center; gap: 10px; height: 29px; padding: 0 12px; background: #f9fafb; border: 1px solid #e5e7eb; border-radius: 3px; }
.search input { flex: 1; min-width: 0; border: 0; padding: 0; background: none; font: inherit; outline: none; }
.search input::placeholder { color: #9ca3af; opacity: 1; }
.source { border-bottom: 1px solid #eef0f3; padding-bottom: 7px; }
.source-head { height: 34px; display: flex; align-items: center; padding: 0 11px 2px 13px; }
.source-head .c { color: #9ca3af; margin-right: 8px; }
.source-head span { flex: 1; margin-left: 6px; }
.source-head small { font-size: 10px; color: #9ca3af; }
.col { display: flex; align-items: center; height: 36px; margin-left: 21px; padding: 0 0 1px 11px; border-radius: 5px; }
.col input { appearance: none; width: 12px; height: 12px; margin: 0; border: 1px solid #9ca3af; background: #fff; display: grid; place-items: center; }
.col input:checked { background: #3b82f6; border-color: #3b82f6; }
.col input:checked::before { content: ""; width: 8px; height: 4px; border: solid #fff; border-width: 0 0 1px 1px; transform: translateY(-1px) rotate(-45deg); }
.col b { width: 18px; margin-left: 13px; font-weight: 400; font-size: 13px; color: #6b7280; }
.picked, .picked b { color: #1d4ed8; }
.picked { background: #eff6ff; }
```
